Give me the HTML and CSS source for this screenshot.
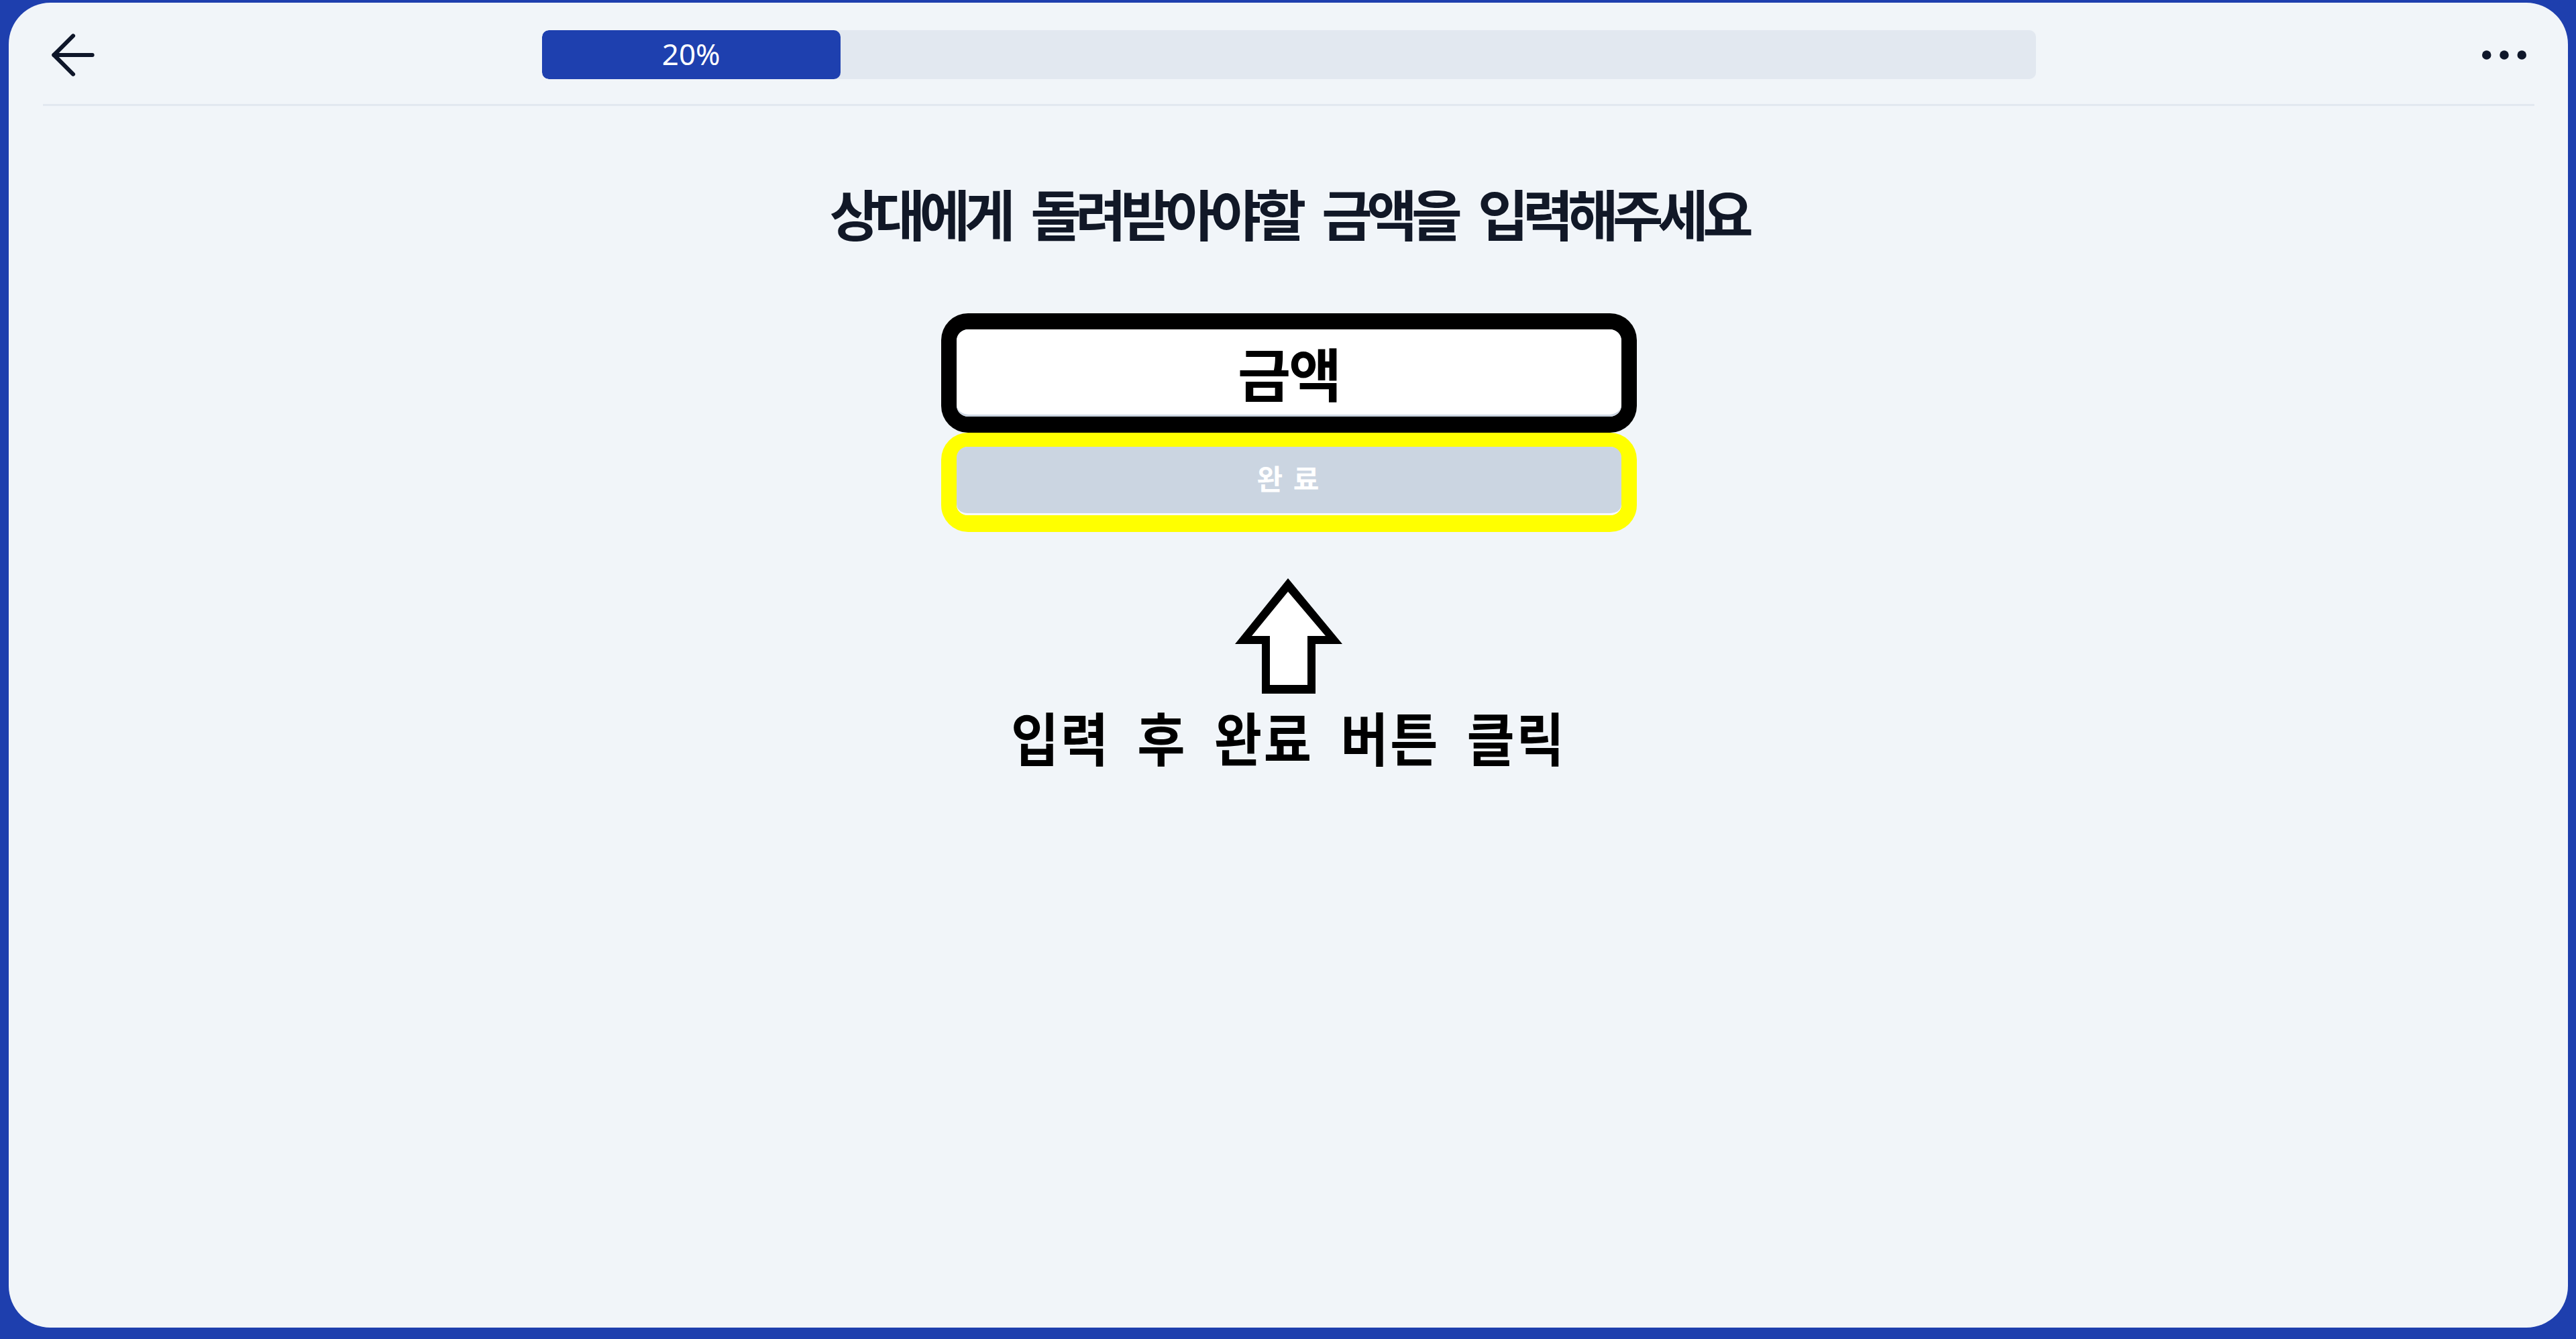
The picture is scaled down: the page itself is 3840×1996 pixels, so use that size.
FILE: index.html
```html
<!DOCTYPE html>
<html lang="ko">
<head>
<meta charset="utf-8">
<title>금액 입력</title>
<link rel="stylesheet" href="styles.css">
</head>
<body>
<div class="screen">
  <header class="topbar">
    <button class="icon-btn back" aria-label="뒤로">
      <svg viewBox="0 0 24 24" fill="none" stroke="currentColor" stroke-width="1.5" stroke-linecap="round" stroke-linejoin="round"><path d="m12 19-7-7 7-7"/><path d="M19 12H5"/></svg>
    </button>
    <div class="progress">
      <div class="progress-fill" style="width:20%"><span>20%</span></div>
    </div>
    <button class="icon-btn more" aria-label="더보기">
      <svg viewBox="0 0 24 24" fill="currentColor"><circle cx="5" cy="12" r="1.8"/><circle cx="12" cy="12" r="1.8"/><circle cx="19" cy="12" r="1.8"/></svg>
    </button>
  </header>
  <main class="content">
    <h1 class="title">상대에게 돌려받아야할 금액을 입력해주세요</h1>
    <div class="form">
      <div class="frame frame-black">
        <div class="amount-input">금액</div>
      </div>
      <div class="frame frame-yellow">
        <button class="submit">완 료</button>
      </div>
    </div>
    <svg class="hint-arrow" viewBox="0 0 160 172" width="160" height="172">
      <polygon points="79,0 160,98 120,98 120,172 40,172 40,98 0,98" fill="#000"/>
      <polygon points="79,20 135,86 108,86 108,159 52,159 52,86 25,86" fill="#fff"/>
    </svg>
    <p class="hint">입력 후 완료 버튼 클릭</p>
  </main>
</div>
</body>
</html>
```
FILE: styles.css
```css
html, body {
  margin: 0;
  height: 100%;
}

body {
  box-sizing: border-box;
  height: 1996px;
  padding: 4px 12px 17px 13px;
  background: #1e3fae;
  font-family: "Noto Sans CJK KR", "Noto Sans", sans-serif;
}

.screen {
  box-sizing: border-box;
  height: 100%;
  display: flex;
  flex-direction: column;
  padding: 0 50px 0 51px;
  background: #f1f5f9;
  border-radius: 62px;
}

.topbar {
  box-sizing: border-box;
  height: 154px;
  padding-top: 4px;
  border-bottom: 3px solid #e2e8f0;
  display: grid;
  grid-template-columns: 1fr 2227px 1fr;
  align-items: center;
}

.icon-btn {
  border: 0;
  padding: 0;
  background: none;
  color: #0f172a;
  display: flex;
}

.back {
  justify-self: start;
  margin-left: -4px;
}

.back svg {
  width: 98px;
  height: 98px;
}

.more {
  justify-self: end;
}

.more svg {
  width: 90px;
  height: 90px;
}

.progress {
  height: 73px;
  background: #e2e8f0;
  border-radius: 10px;
  overflow: hidden;
  display: flex;
}

.progress-fill {
  box-sizing: border-box;
  height: 100%;
  padding-bottom: 3px;
  background: #1e40af;
  border-radius: 10px;
  display: flex;
  align-items: center;
  justify-content: center;
  color: #fff;
  font-family: "Noto Sans", sans-serif;
  font-size: 44px;
}

.content {
  display: flex;
  flex-direction: column;
  align-items: center;
}

.title {
  margin: 118px 0 0;
  font-size: 82px;
  line-height: 82px;
  font-weight: 700;
  letter-spacing: -8.4px;
  word-spacing: 17px;
  color: #111827;
}

.form {
  margin-top: 109px;
  width: 1037px;
  display: flex;
  flex-direction: column;
}

.frame {
  border-style: solid;
  border-radius: 40px;
}

.frame-black {
  border-color: #000;
  border-width: 24px 23px;
}

.frame-yellow {
  border-color: #ffff00;
  border-width: 21px 23px 25px;
}

.amount-input {
  box-sizing: border-box;
  height: 130px;
  background: #fff;
  border-radius: 18px;
  border-bottom: 3px solid #cbd5e1;
  display: flex;
  align-items: center;
  justify-content: center;
  font-size: 86px;
  font-weight: 700;
  letter-spacing: -3px;
  color: #000;
}

.submit {
  box-sizing: border-box;
  width: 100%;
  height: 102px;
  padding: 0 0 8px;
  border: 0;
  border-bottom: 3px solid #f8fafc;
  border-radius: 16px;
  background: #cbd5e1;
  color: #ffffff;
  font-family: "Noto Sans CJK KR", "Noto Sans", sans-serif;
  font-size: 42px;
  font-weight: 700;
  letter-spacing: 2px;
  display: flex;
  align-items: center;
  justify-content: center;
}

.hint-arrow {
  margin-top: 69px;
  display: block;
}

.hint {
  margin: 22px 0 0;
  font-size: 86px;
  line-height: 84px;
  font-weight: 700;
  letter-spacing: 3px;
  word-spacing: 18px;
  color: #000;
  transform: scaleX(0.9);
}
```
